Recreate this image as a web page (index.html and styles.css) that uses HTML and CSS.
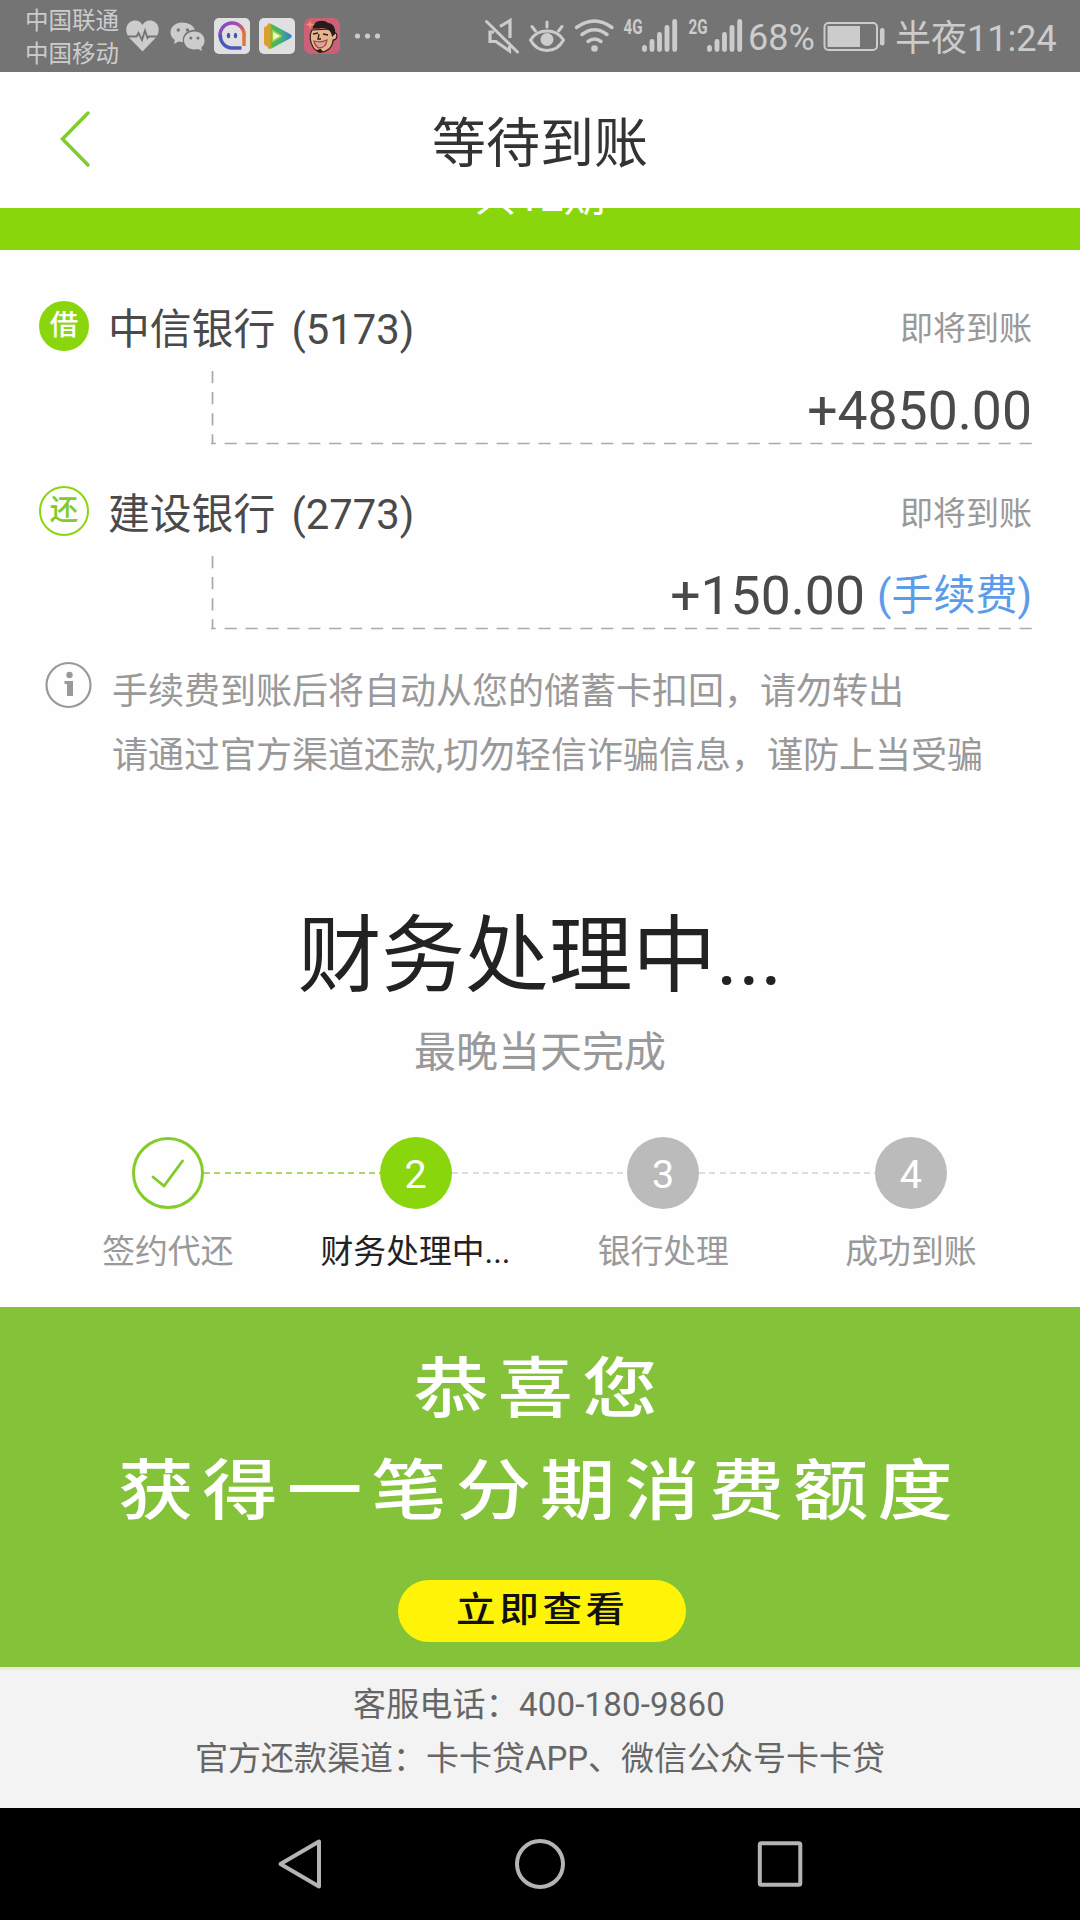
FILE: index.html
```html
<!DOCTYPE html>
<html lang="zh-CN">
<head>
<meta charset="utf-8">
<title>等待到账</title>
<link rel="stylesheet" href="styles.css">
</head>
<body>
<div class="screen">
  <div class="statusbar">
    <div class="carriers"><span>中国联通</span><span>中国移动</span></div>
    <svg class="notifications" width="261" height="72" viewBox="120 0 261 72">
      <path fill="#ccc" d="M142.500 51.500 L129 37.500 C124 31 126 22 133.500 20.500 C138 20 141 22 142.500 25 C144 22 147 20 151.500 20.500 C159 22 161 31 156 37.500Z"/>
      <path fill="none" stroke="#747474" stroke-width="1.900" d="M124 36.500H136.500L138.500 33L142 40L145 30.500L147.500 38L149 36.500H161"/>
      <path fill="#ccc" d="M182 22.500c-6.500 0-11.500 4.500-11.500 10 0 3.200 1.700 5.800 4.300 7.600l-.8 4 4.500-2.500c1.500.4 3 .5 4.500.4-1.500-7.500 5-12.500 11.800-12.200C193.500 25.500 188.300 22.500 182 22.500z"/>
      <circle cx="178.300" cy="30" r="1.700" fill="#747474"/><circle cx="187.500" cy="30" r="1.700" fill="#747474"/>
      <path fill="#ccc" d="M194.500 31.500c-6 0-10.500 4-10.500 9s4.500 9 10.500 9c1.300 0 2.400-.2 3.500-.5l4 2-.8-3.300c2-1.600 3.300-4 3.300-7.200 0-5-4.200-9-10-9z"/>
      <circle cx="190.800" cy="38" r="1.500" fill="#747474"/><circle cx="198" cy="38" r="1.500" fill="#747474"/>
      <defs>
        <linearGradient id="ring" x1="0" y1="0" x2="1" y2="1"><stop offset="0" stop-color="#7c48c8"/><stop offset=".35" stop-color="#9c4eb0"/><stop offset=".7" stop-color="#e2713a"/><stop offset="1" stop-color="#dd7a35"/></linearGradient>
        <linearGradient id="play" x1="0" y1="0" x2="1" y2="0"><stop offset="0" stop-color="#e89a2c"/><stop offset=".22" stop-color="#c9a52e"/><stop offset=".3" stop-color="#55b548"/><stop offset=".6" stop-color="#43b27d"/><stop offset="1" stop-color="#3d78cf"/></linearGradient>
      </defs>
      <rect x="214" y="18" width="36" height="36" rx="5" fill="#e0e0e3"/>
      <path fill="none" stroke="url(#ring)" stroke-width="3.500" d="M244 46V36.500A12 12 0 1 0 220.500 38"/>
      <path fill="none" stroke="#4a58b8" stroke-width="3.500" d="M220.500 34.500A12 12 0 0 0 232 48H241.500"/>
      <ellipse cx="228.500" cy="35.500" rx="1.700" ry="2.700" fill="#4455ad"/><ellipse cx="235.500" cy="35.500" rx="1.700" ry="2.700" fill="#4455ad"/>
      <rect x="259" y="18" width="36" height="36" rx="5" fill="#e0e0e3"/>
      <path fill="url(#play)" d="M264 29Q264 26 267 26Q267.500 22 271.500 24L290 34Q293.500 36 290 38.500L271.500 48.500Q268 50 267 46Q264.500 46.500 264 43Z"/>
      <path fill="#f0f3e8" stroke="#9fd03d" stroke-width="1.500" stroke-linejoin="round" d="M272.500 30.500L281.500 36L272.500 41.500Z"/>
      <rect x="304" y="18" width="36" height="36" rx="7" fill="#cd6077"/>
      <path fill="#e6b58d" stroke="#2b211c" stroke-width="1.200" d="M312 30C309 35 310 42 313 47C316 52 323 54 329 49C332 46 333 43 333 40C338 40 338 32 334 33L332 29Z"/>
      <path fill="#241c1b" d="M313 29C312 26 315 25 315 23C318 20 325 20 328 23C333 23 336 28 335 34L332 37C332 31 327 28 322 28C318 29 315 28 313 29Z"/>
      <path fill="none" stroke="#2b211c" stroke-width="1.300" d="M313 34l5-1M323 34l5 1M319 34l-1 5h3"/>
      <path fill="#dba39a" stroke="#a44644" stroke-width="1.300" d="M314 41Q321 43 327 40Q326 48 319 48Q315 46 314 41Z"/>
      <path fill="#241c1b" d="M316 50l5-1 2 3-4 1z"/>
      <path fill="#f09765" d="M310 20l1 3.500 3.500 1-3.500 1-1 3.500-1-3.500-3.500-1 3.500-1z"/>
      <g fill="#ccc"><circle cx="357.500" cy="36" r="2.600"/><circle cx="367.500" cy="36" r="2.600"/><circle cx="377.500" cy="36" r="2.600"/></g>
    </svg>
    <svg class="signals" width="266" height="72" viewBox="480 0 266 72">
      <g fill="none" stroke="#ccc" stroke-linecap="round" stroke-width="3">
        <path d="M486.500 21.500L517.500 52" stroke-width="2.900"/>
        <path d="M500 26.500L510 20.500V38M494 32H490V41.500H496L509.500 51V46" stroke-linecap="butt" stroke-width="3.200"/>
        <path d="M530.500 40C538 28 556 28 563.500 40C556 54 538 54 530.500 40Z"/>
        <path d="M547 22V27M532 26.500L535.500 31M562 26.500L558.500 31"/>
        <path d="M576.500 27.500Q594.500 14.500 612 27.500" stroke-width="3.500"/>
        <path d="M582 34.500Q594.500 25 607 34.500" stroke-width="3.500"/>
        <path d="M588 41.500Q594.500 36.500 601 41.500" stroke-width="3.500"/>
      </g>
      <circle cx="547" cy="39.500" r="6.500" fill="#ccc"/><circle cx="594.500" cy="48.500" r="3.300" fill="#ccc"/>
      <g stroke="#ccc" stroke-width="4.900" stroke-linecap="round">
        <path d="M644.500 47.500v2M652 41.500v8M659.500 34.500v15M667 27.500v22M674.700 21.500v28"/>
        <path d="M709.500 47.500v2M717 41.500v8M724.500 34.500v15M732 27.500v22M739.700 21.500v28"/>
      </g>
      <text class="net" x="623.500" y="34" textLength="19" lengthAdjust="spacingAndGlyphs">4G</text>
      <text class="net" x="688.500" y="34" textLength="19" lengthAdjust="spacingAndGlyphs">2G</text>
    </svg>
    <span class="percent">68%</span>
    <svg class="battery" width="64" height="72" viewBox="822 0 64 72">
      <rect x="824.500" y="23" width="52.500" height="27" rx="4" fill="none" stroke="#ccc" stroke-width="2"/>
      <rect x="827.500" y="26" width="32.500" height="21" fill="#ccc"/>
      <rect x="880" y="28" width="4.500" height="17.500" rx="2" fill="#ccc"/>
    </svg>
    <span class="clock">半夜11:24</span>
  </div>

  <div class="header">
    <svg class="back" width="34" height="58" viewBox="0 0 34 58"><path d="M30 3L4.500 29L30 55" fill="none" stroke="#80cc2c" stroke-width="3.500" stroke-linecap="round"/></svg>
    <h1>等待到账</h1>
  </div>
  <div class="periods"><span>共12期</span></div>

  <div class="accounts">
    <div class="account">
      <div class="bank"><span class="badge filled">借</span><span class="name">中信银行 <span class="tail">(5173)</span></span><span class="state">即将到账</span></div>
      <div class="amount">
        <svg class="dashes" width="822" height="74"><path d="M1.500 0V73" stroke-dasharray="12.200 8.900"/><path d="M820.700 72.500H0" stroke-dasharray="12.100 8.820"/></svg>
        <span>+4850.00</span>
      </div>
    </div>
    <div class="account">
      <div class="bank"><span class="badge">还</span><span class="name">建设银行 <span class="tail">(2773)</span></span><span class="state">即将到账</span></div>
      <div class="amount">
        <svg class="dashes" width="822" height="74"><path d="M1.500 0V73" stroke-dasharray="12.200 8.900"/><path d="M820.700 72.500H0" stroke-dasharray="12.100 8.820"/></svg>
        <span>+150.00</span><span class="fee">(手续费)</span>
      </div>
    </div>
  </div>

  <div class="notice">
    <svg width="48" height="48" viewBox="0 0 48 48"><circle cx="24.500" cy="24" r="22" fill="none" stroke="#999" stroke-width="2.200"/><circle cx="25.500" cy="14" r="3.200" fill="#999"/><path fill="#999" d="M20.500 20H29V35H23V23H20.500Z"/></svg>
    <p>手续费到账后将自动从您的储蓄卡扣回，请勿转出<br>请通过官方渠道还款,切勿轻信诈骗信息，谨防上当受骗</p>
  </div>

  <div class="progress">
    <h2>财务处理中...</h2>
    <p>最晚当天完成</p>
  </div>

  <div class="steps">
    <div class="step done"><span class="dot"><svg width="36" height="32" viewBox="0 0 36 32"><path d="M3 19L14 28L32.500 3" fill="none" stroke="#80cc2c" stroke-width="2.900" stroke-linecap="round"/></svg></span><span class="label">签约代还</span></div>
    <div class="step active"><span class="dot">2</span><span class="label">财务处理中...</span></div>
    <div class="step"><span class="dot">3</span><span class="label">银行处理</span></div>
    <div class="step"><span class="dot">4</span><span class="label">成功到账</span></div>
  </div>

  <div class="banner">
    <div class="headline">恭喜您</div>
    <div class="headline">获得一笔分期消费额度</div>
    <div class="cta"><span>立即查看</span></div>
  </div>

  <div class="footer">
    <div class="phone">客服电话：400-180-9860</div>
    <div>官方还款渠道：卡卡贷APP、微信公众号卡卡贷</div>
  </div>

  <div class="navbar">
    <svg width="60" height="60" viewBox="0 0 60 60"><path d="M49 7.500V52.500L10.500 30Z"/></svg>
    <svg width="60" height="60" viewBox="0 0 60 60"><circle cx="30" cy="30" r="23"/></svg>
    <svg width="60" height="60" viewBox="0 0 60 60"><rect x="9.800" y="9.200" width="40.500" height="41.500" rx="1.500"/></svg>
  </div>
</div>
</body>
</html>
```
FILE: styles.css
```css
* { box-sizing: border-box; margin: 0; padding: 0; }
body { background: #fff; }
svg { display: block; flex: none; }
.screen {
  width: 1080px; height: 1920px; overflow: hidden;
  display: flex; flex-direction: column;
  font-family: Roboto, "Noto Sans CJK SC", sans-serif;
  color: #4a4a4a; background: #fefefe; white-space: nowrap;
}
.screen > div { flex: none; }
.statusbar { height: 72px; background: #747474; color: #ccc; display: flex; align-items: center; padding-left: 25px; }
.carriers { display: flex; flex-direction: column; width: 95px; font-size: 23.500px; line-height: 33px; padding-top: 4px; }
.signals { margin-left: 99px; }
.net { font: 700 20px Roboto, sans-serif; fill: #ccc; }
.percent { width: 74px; padding-left: 2px; font-size: 36px; line-height: 72px; padding-top: 3px; }
.battery { margin-left: 2px; }
.clock { margin-left: 9px; font-size: 36px; line-height: 72px; padding-top: 5px; }

.header { height: 136px; display: grid; grid-template-columns: 120px 1fr 120px; align-items: center; }
.back { margin-left: 58px; margin-top: -2px; }
.header h1 { font-size: 54px; line-height: 80px; font-weight: 400; text-align: center; color: #333; padding-top: 9px; }
.periods { height: 42px; background: #8ad60d; color: #fff; overflow: hidden; display: flex; justify-content: center; align-items: flex-end; font-size: 42px; line-height: 48px; padding-bottom: 29px; }

.accounts { padding: 46px 48px 0 39px; }
.account { height: 185px; }
.account:last-child { height: 170px; }
.bank { height: 60px; display: flex; align-items: center; }
.badge { width: 50px; height: 50px; border-radius: 50%; border: 2.500px solid #8ad60d; color: #80cc2c; font-size: 28.500px; line-height: 46px; text-align: center; font-weight: 500; }
.badge.filled { background: #8ad60d; color: #fff; }
.name { margin-left: 19px; font-size: 41.800px; line-height: 60px; padding-top: 8px; }
.tail { margin-left: 6px; }
.state { margin-left: auto; font-size: 33px; color: #999; }
.amount { position: relative; margin: 15px 0 0 172px; height: 74px; display: flex; justify-content: flex-end; align-items: center; font-size: 53.500px; line-height: 74px; padding-top: 5px; }
.dashes { position: absolute; left: 0; top: 0; }
.dashes path { fill: none; stroke: #aaa; stroke-width: 1.700px; }
.fee { font-size: 42px; color: #5a9bea; margin-left: 12px; padding-top: 1px; }

.notice { display: flex; padding: 9px 0 0 44px; height: 169px; color: #999; }
.notice svg { margin-top: 1px; }
.notice p { margin-left: 20px; font-size: 36px; line-height: 64px; }

.progress { text-align: center; padding-top: 81px; height: 317px; }
.progress h2 { font-size: 83.700px; line-height: 110px; font-weight: 400; color: #222; }
.progress p { font-size: 42px; line-height: 60px; color: #999; margin-top: 12px; }

.steps { display: grid; grid-template-columns: repeat(4, 247.700px); margin-left: 44px; height: 170px; }
.step { display: flex; flex-direction: column; align-items: center; position: relative; }
.dot { width: 72px; height: 72px; border-radius: 50%; background: #bbb; color: #fff; font-size: 39.500px; padding-top: 2px; display: flex; align-items: center; justify-content: center; }
.step.active .dot { background: #8ad60d; }
.step.done .dot { background: none; border: 3px solid #84cc28; }
.label { font-size: 32.800px; line-height: 44px; margin-top: 21px; color: #999; }
.active .label { color: #222; }
.step:not(:last-child)::after {
  content: ""; position: absolute; left: 160px; top: 35px; width: 175.700px; height: 2px;
  background: repeating-linear-gradient(90deg, #ddd 0 6px, transparent 6px 10.300px);
}
.step.done::after { background: repeating-linear-gradient(90deg, #a8d860 0 6px, transparent 6px 10.300px) !important; }

.banner { height: 360px; background: #84c239; display: flex; flex-direction: column; align-items: center; padding-top: 32px; color: #fff; }
.headline { font-size: 66px; line-height: 102px; height: 102px; font-weight: 500; letter-spacing: 8px; transform: scaleX(1.140); }
.cta { width: 288px; height: 62px; border-radius: 31px; background: #fff408; color: #111; margin: 37px 0 0 3px; display: flex; align-items: center; justify-content: center; font-weight: 500; font-size: 35px; }
.cta span { letter-spacing: 3.200px; transform: scaleX(1.130); line-height: 60px; margin-left: 2px; }

.footer { height: 141px; background: #f3f3f3; border-top: 3px solid #e6ebdc; text-align: center; color: #666; font-size: 33px; line-height: 54px; padding-top: 8px; }
.phone { letter-spacing: .2px; margin-left: -2px; }
.navbar { height: 112px; background: #000; display: flex; justify-content: space-between; padding: 26px 270px 0; }
.navbar path, .navbar circle, .navbar rect { fill: none; stroke: #b4b4b4; stroke-width: 4px; stroke-linejoin: round; }
```
